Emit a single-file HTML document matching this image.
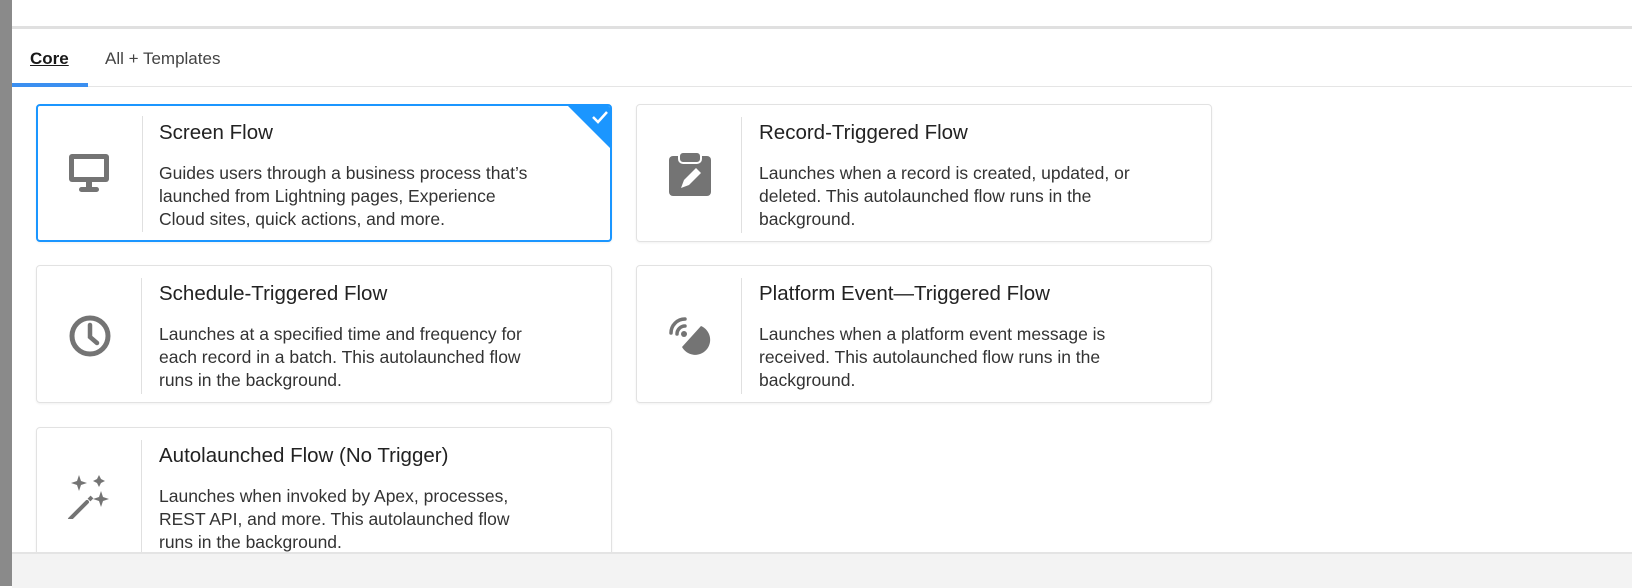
<!DOCTYPE html><html><head><style>
body{margin:0;width:1632px;height:586px;overflow:hidden;background:#fff;font-family:"Liberation Sans",sans-serif;position:relative;color:#181818}
.ls{position:absolute;left:0;top:0;width:12px;height:586px;background:#8a8a8a}
.topline{position:absolute;left:12px;top:26px;width:1620px;height:3px;background:#e0e0e0}
.tabs{position:absolute;left:12px;top:29px;width:1620px;height:57px;border-bottom:1px solid #e5e5e5}
.tab{position:absolute;top:20px;font-size:17px;color:#444}
.ind{position:absolute;left:12px;top:83px;width:76px;height:4px;background:#3b8ff0}
.card{position:absolute;width:574px;height:136px;border:1px solid #e2e2e2;border-radius:4px;background:#fff;box-shadow:0 1px 2px rgba(0,0,0,.06);overflow:hidden}
.card.sel{border:2px solid #1b96ff;width:572px;height:134px}
.div{position:absolute;left:104px;top:12px;width:1px;height:116px;background:#e0e0e0}
.ic{position:absolute;left:30px;top:47px;width:44px;height:44px}
.t{position:absolute;left:122px;top:16px;font-size:20.5px;color:#222}
.d{position:absolute;left:122px;top:57px;width:382px;font-size:17.5px;line-height:23px;color:#333}
.bot{position:absolute;left:12px;top:552px;width:1620px;height:34px;background:#f3f3f3;border-top:2px solid #e4e4e4}
</style></head><body>
<div class="ls"></div>
<div class="topline"></div>
<div class="tabs">
<div class="tab" style="left:18px;font-weight:bold;color:#181818;text-decoration:underline">Core</div>
<div class="tab" style="left:93px">All + Templates</div>
</div>
<div class="ind"></div>

<div class="card sel" style="left:36px;top:104px">
<svg style="position:absolute;right:0;top:0" width="42" height="42"><polygon points="0,0 42,0 42,42" fill="#1b96ff"/><path d="M25 11l5 5 9-10" stroke="#fff" stroke-width="2.5" fill="none"/></svg>
<div class="ic" style="left:29px;top:45px"><svg width="44" height="44" viewBox="0 0 44 44"><rect x="2" y="3" width="40" height="28" rx="3" fill="#747474"/><rect x="7" y="8" width="30" height="18" fill="#fff"/><rect x="19" y="31" width="6" height="5" fill="#747474"/><rect x="12" y="36" width="20" height="5" rx="2.5" fill="#747474"/></svg></div>
<div class="div" style="top:10px"></div>
<div class="t" style="left:121px;top:15px">Screen Flow</div>
<div class="d" style="left:121px;top:56px">Guides users through a business process that’s launched from Lightning pages, Experience Cloud sites, quick actions, and more.</div>
</div>

<div class="card" style="left:636px;top:104px">
<div class="ic" style="left:30px"><svg width="44" height="44" viewBox="0 0 44 44"><rect x="2" y="4" width="42" height="40" rx="4" fill="#747474"/><rect x="12" y="0" width="22" height="11" rx="4" fill="#747474" stroke="#fff" stroke-width="2"/><path d="M14 36l3-8 12-12 5 5-12 12z" fill="#fff"/></svg></div>
<div class="div"></div>
<div class="t">Record-Triggered Flow</div>
<div class="d">Launches when a record is created, updated, or deleted. This autolaunched flow runs in the background.</div>
</div>

<div class="card" style="left:36px;top:265px">
<div class="ic"><svg width="44" height="44" viewBox="0 0 44 44"><circle cx="23" cy="23" r="18" fill="none" stroke="#747474" stroke-width="5"/><path d="M23 12v12l7 6" stroke="#747474" stroke-width="4.5" fill="none" stroke-linecap="round"/></svg></div>
<div class="div"></div>
<div class="t">Schedule-Triggered Flow</div>
<div class="d">Launches at a specified time and frequency for each record in a batch. This autolaunched flow runs in the background.</div>
</div>

<div class="card" style="left:636px;top:265px">
<div class="ic"><svg width="44" height="44" viewBox="0 0 44 44"><path d="M34 13A15 15 0 1 1 15 34z" fill="#747474"/><path d="M4 20A14 14 0 0 1 18 6" stroke="#747474" stroke-width="3.5" fill="none" stroke-linecap="round"/><path d="M10 21A8 8 0 0 1 18 13" stroke="#747474" stroke-width="3.5" fill="none" stroke-linecap="round"/><circle cx="17" cy="21" r="3" fill="#747474"/></svg></div>
<div class="div"></div>
<div class="t">Platform Event—Triggered Flow</div>
<div class="d">Launches when a platform event message is received. This autolaunched flow runs in the background.</div>
</div>

<div class="card" style="left:36px;top:427px;height:150px">
<div class="ic"><svg width="44" height="44" viewBox="0 0 44 44"><path d="M3 44L20 27" stroke="#747474" stroke-width="4" stroke-linecap="round"/><path d="M22 25l3-3" stroke="#747474" stroke-width="4"/><path d="M12 0l2 6 6 2-6 2-2 6-2-6-6-2 6-2z" fill="#747474"/><path d="M32 0l2 4 4 2-4 2-2 4-2-4-4-2 4-2z" fill="#747474"/><path d="M34 16l2 6 6 2-6 2-2 6-2-6-6-2 6-2z" fill="#747474"/></svg></div>
<div class="div" style="height:140px"></div>
<div class="t">Autolaunched Flow (No Trigger)</div>
<div class="d">Launches when invoked by Apex, processes, REST API, and more. This autolaunched flow runs in the background.</div>
</div>
<div class="bot"></div>
</body></html>
